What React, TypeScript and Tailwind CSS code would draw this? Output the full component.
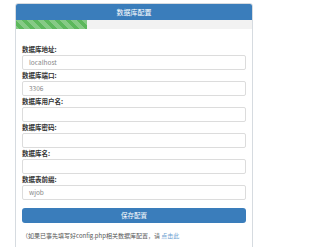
const fields = [
  { label: '数据库地址:', value: 'localhost' },
  { label: '数据库端口:', value: '3306' },
  { label: '数据库用户名:', value: '' },
  { label: '数据库密码:', value: '' },
  { label: '数据库名:', value: '' },
  { label: '数据表前缀:', value: 'wjob' },
]

const App = () => {
  return (
    <main
      className="w-[264px] h-[247px] bg-white overflow-hidden pt-[3px] pl-[15px]"
      style={{ fontFamily: '"Noto Sans CJK SC", "Liberation Sans", sans-serif' }}
    >
      <div className="w-[238px] h-[250px] border border-[#d6dbe0] rounded-t-[3px]">
        <div className="h-[16px] bg-[#3a7dbb] rounded-t-[2px] flex items-center justify-center text-white text-[7px] leading-none">
          数据库配置
        </div>
        <div className="h-[9px] bg-[#f2f2f2]">
          <div className="h-full w-[71px] bg-[#5cb85c] bg-[linear-gradient(45deg,rgba(255,255,255,.25)_25%,transparent_25%,transparent_50%,rgba(255,255,255,.25)_50%,rgba(255,255,255,.25)_75%,transparent_75%,transparent)] [background-size:11px_11px]" />
        </div>
        <div className="px-[6px] pt-[15px]">
          {fields.map((item, index) => (
            <div key={index}>
              <div className="h-[11px] leading-[11px] text-[6.5px] font-bold text-[#333]">
                {item.label}
              </div>
              <div className="h-[15px] border border-[#dcdcdc] rounded-[2px] flex items-center px-[6px] text-[6.5px] text-[#888]">
                {item.value}
              </div>
            </div>
          ))}
          <div className="mt-[8px] h-[15px] rounded-[3px] bg-[#3a7dbb] flex items-center justify-center text-white text-[6.5px]">
            保存配置
          </div>
          <p className="mt-[7px] h-[12px] leading-[12px] text-[6px] text-[#555] whitespace-nowrap">
            （如果已事先填写好config.php相关数据库配置，请{' '}
            <span className="text-[#6b9ed0]">点击此</span>
          </p>
        </div>
      </div>
    </main>
  )
}

export default App
